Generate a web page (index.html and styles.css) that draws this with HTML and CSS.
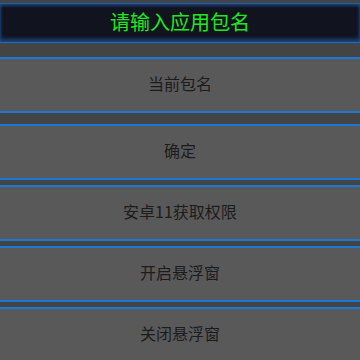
FILE: index.html
```html
<!DOCTYPE html>
<html lang="zh-CN">
<head>
    <meta charset="UTF-8">
    <meta name="viewport" content="width=device-width, initial-scale=1.0">
    <title>包名</title>
    <link rel="stylesheet" href="styles.css">
</head>
<body>
    <div class="container">
        <div class="title-bar">请输入应用包名</div>
        <div class="buttons">
            <button class="btn btn-first">当前包名</button>
            <button class="btn">确定</button>
            <button class="btn">安卓11获取权限</button>
            <button class="btn">开启悬浮窗</button>
            <button class="btn">关闭悬浮窗</button>
        </div>
    </div>
</body>
</html>
```

FILE: styles.css
```css
body {
    margin: 0;
    padding: 0;
    background-color: #444444;
    font-family: "Noto Sans CJK SC", "Noto Sans", sans-serif;
    overflow: hidden;
}
.container {
    padding-top: 3px;
}
.title-bar {
    height: 38px;
    line-height: 36px;
    text-align: center;
    color: #1ee81e;
    font-size: 20px;
    background: #11131e;
    border-top: 1px solid #1d5fa8;
    border-bottom: 1px solid #1d6fc4;
    box-shadow: inset 0 2px 3px rgba(40, 120, 220, 0.45), inset 0 -3px 4px rgba(40, 120, 220, 0.5);
}
.buttons {
    display: flex;
    flex-direction: column;
    gap: 5px;
    margin-top: 14px;
}
.btn {
    height: 56px;
    width: 100%;
    border: none;
    border-top: 2px solid #1c78d6;
    border-bottom: 2px solid #1c78d6;
    background-color: #595959;
    color: #1c1c1c;
    font-family: "Noto Sans CJK SC", "Noto Sans", sans-serif;
    font-size: 16px;
    padding: 0 0 4px 0;
}
.btn-first {
    margin-bottom: 6px;
}
```
